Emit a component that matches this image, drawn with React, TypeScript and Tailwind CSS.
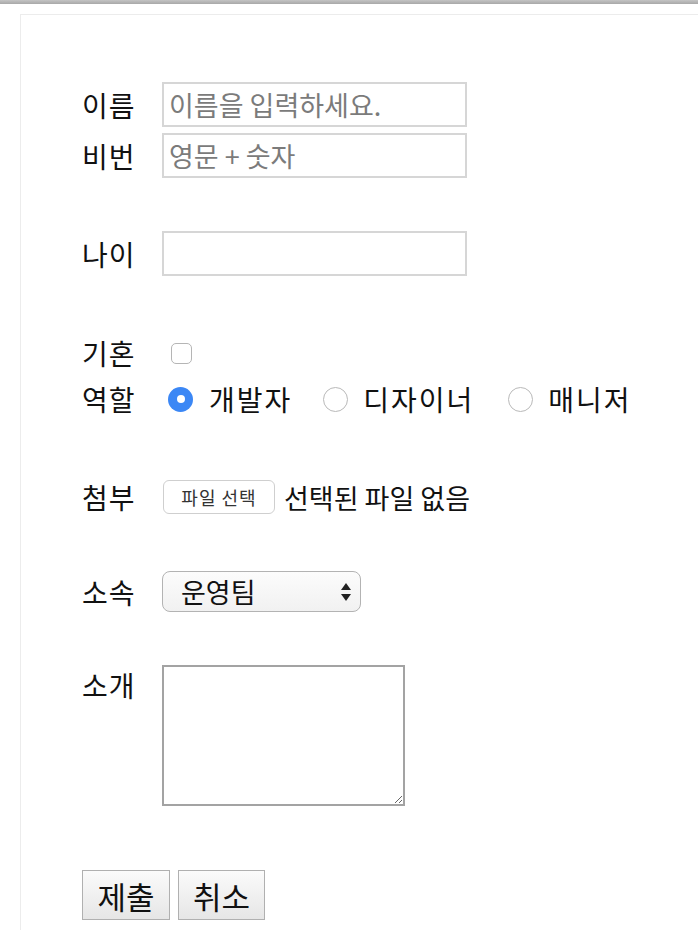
import React from 'react';

const font = { fontFamily: '"Noto Sans CJK KR", "Noto Sans", sans-serif' };

function Label({ children }: { children: React.ReactNode }) {
  return <span className="w-[80px] shrink-0 text-[28px] leading-none tracking-[1px] text-[#111]">{children}</span>;
}

function Radio({ checked }: { checked?: boolean }) {
  return checked ? (
    <span className="flex h-[25px] w-[25px] shrink-0 items-center justify-center rounded-full bg-[#3b87f5]">
      <span className="block h-[8px] w-[8px] rounded-full bg-white" />
    </span>
  ) : (
    <span className="block h-[25px] w-[25px] shrink-0 rounded-full border-[1.5px] border-[#b9b9b9] bg-white" />
  );
}

const inputCls =
  'h-[45px] w-[305px] border-2 border-[#d6d6d6] px-[5px] text-[27px] text-[#111] outline-none placeholder:text-[#7b7b7b]';

export default function App() {
  return (
    <div className="min-h-[930px] bg-white" style={font}>
      <div className="h-[4px] bg-gradient-to-b from-[#c4c4c4] to-[#a8a8a8]" />

      <div className="ml-[20px] mt-[10px] border-l border-t border-[#ececec] pl-[61px] pt-[67px]">
        {/* 이름 / 비번 */}
        <div className="flex h-[45px] items-center">
          <Label>이름</Label>
          <input placeholder="이름을 입력하세요." className={inputCls} />
        </div>
        <div className="mt-[6px] flex h-[45px] items-center">
          <Label>비번</Label>
          <input placeholder="영문 + 숫자" className={inputCls} />
        </div>

        {/* 나이 */}
        <div className="mt-[53px] flex h-[45px] items-center">
          <Label>나이</Label>
          <input className={inputCls} />
        </div>

        {/* 기혼 / 역할 */}
        <div className="mt-[54px] flex h-[46px] items-center">
          <Label>기혼</Label>
          <span className="ml-[9px] block h-[21px] w-[21px] rounded-[5px] border-[1.5px] border-[#b5b5b5] bg-white" />
        </div>
        <div className="flex h-[46px] items-center">
          <Label>역할</Label>
          <div className="ml-[6px] flex items-center text-[28px] leading-none tracking-[2px] text-[#111]">
            <Radio checked />
            <span className="ml-[16px]">개발자</span>
            <span className="ml-[31px]"><Radio /></span>
            <span className="ml-[15px]">디자이너</span>
            <span className="ml-[34px]"><Radio /></span>
            <span className="ml-[15px]">매니저</span>
          </div>
        </div>

        {/* 첨부 */}
        <div className="mt-[58px] flex h-[34px] items-center">
          <Label>첨부</Label>
          <span className="ml-[1px] flex h-[34px] w-[112px] items-center justify-center rounded-[6px] border-[1.5px] border-[#cfcfcf] bg-white text-[18px] tracking-[1px] text-[#333]">
            파일 선택
          </span>
          <span className="ml-[9px] text-[27px] leading-none text-[#111]">선택된 파일 없음</span>
        </div>

        {/* 소속 */}
        <div className="mt-[57px] flex h-[41px] items-center">
          <Label>소속</Label>
          <div className="flex h-[41px] w-[199px] items-center justify-between rounded-[8px] border-[1.5px] border-[#b3b3b3] bg-gradient-to-b from-[#fcfcfc] to-[#f1f1f1] pl-[18px] pr-[8px]">
            <span className="text-[27px] leading-none text-[#111]">운영팀</span>
            <svg width="12" height="20" viewBox="0 0 12 20">
              <path d="M6 1 L11 8 H1 Z" fill="#222" />
              <path d="M6 19 L11 12 H1 Z" fill="#222" />
            </svg>
          </div>
        </div>

        {/* 소개 */}
        <div className="mt-[53px] flex items-start">
          <span className="w-[80px] shrink-0 pt-[6px] text-[28px] leading-none tracking-[1px] text-[#111]">소개</span>
          <textarea className="h-[141px] w-[243px] resize border-2 border-[#a3a3a3] outline-none" />
        </div>

        {/* 버튼 */}
        <div className="mt-[64px] flex gap-[8px] pb-[10px]">
          <button className="h-[50px] w-[88px] border-[1.5px] border-[#b0b0b0] bg-gradient-to-b from-[#fbfbfb] to-[#e6e6e6] text-[31px] leading-none text-[#111]">
            제출
          </button>
          <button className="h-[50px] w-[87px] border-[1.5px] border-[#b0b0b0] bg-gradient-to-b from-[#fbfbfb] to-[#e6e6e6] text-[31px] leading-none text-[#111]">
            취소
          </button>
        </div>
      </div>
    </div>
  );
}
